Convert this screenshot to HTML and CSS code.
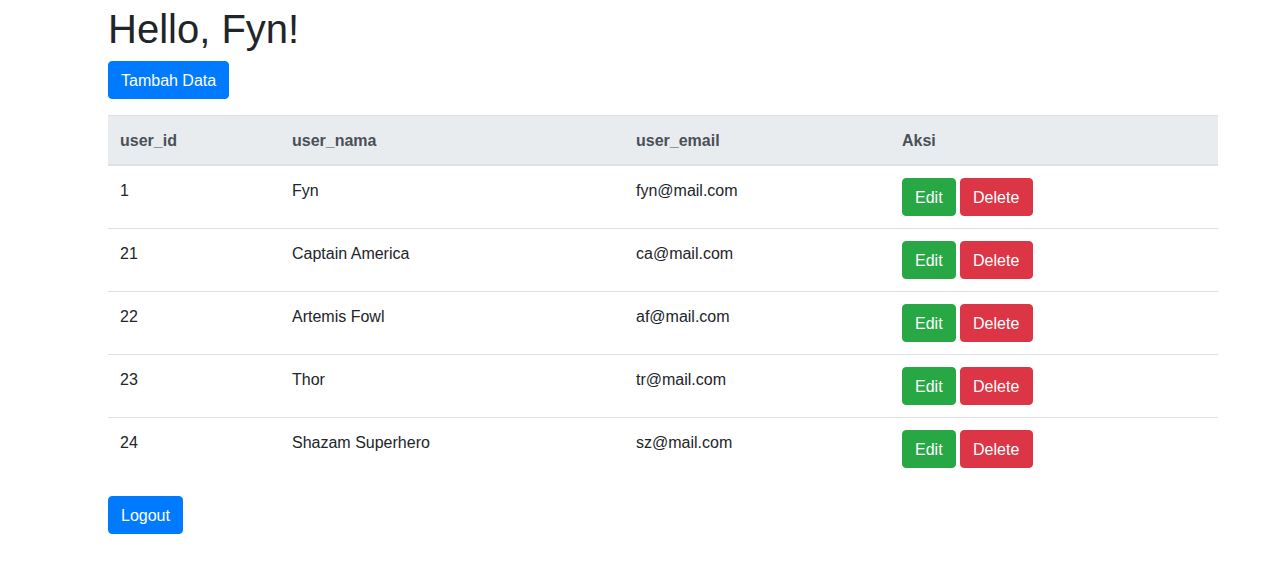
FILE: index.html
```html
<!DOCTYPE html>
<html lang="id">
<head>
<meta charset="utf-8">
<title>Hello, Fyn!</title>
<link rel="stylesheet" href="styles.css">
</head>
<body>
<div class="container">
  <h1 class="title">Hello, Fyn!</h1>
  <a class="btn btn-primary" href="#">Tambah Data</a>
  <table class="table">
    <colgroup>
      <col class="c1"><col class="c2"><col class="c3"><col class="c4">
    </colgroup>
    <thead>
      <tr><th>user_id</th><th>user_nama</th><th>user_email</th><th>Aksi</th></tr>
    </thead>
    <tbody>
      <tr><td>1</td><td>Fyn</td><td>fyn@mail.com</td><td class="actions"><a class="btn btn-success" href="#">Edit</a> <a class="btn btn-danger" href="#">Delete</a></td></tr>
      <tr><td>21</td><td>Captain America</td><td>ca@mail.com</td><td class="actions"><a class="btn btn-success" href="#">Edit</a> <a class="btn btn-danger" href="#">Delete</a></td></tr>
      <tr><td>22</td><td>Artemis Fowl</td><td>af@mail.com</td><td class="actions"><a class="btn btn-success" href="#">Edit</a> <a class="btn btn-danger" href="#">Delete</a></td></tr>
      <tr><td>23</td><td>Thor</td><td>tr@mail.com</td><td class="actions"><a class="btn btn-success" href="#">Edit</a> <a class="btn btn-danger" href="#">Delete</a></td></tr>
      <tr><td>24</td><td>Shazam Superhero</td><td>sz@mail.com</td><td class="actions"><a class="btn btn-success" href="#">Edit</a> <a class="btn btn-danger" href="#">Delete</a></td></tr>
    </tbody>
  </table>
  <a class="btn btn-primary" href="#">Logout</a>
</div>
</body>
</html>
```
FILE: styles.css
```css
* { box-sizing: border-box; }
html, body { margin: 0; padding: 0; background: #fff; }
body {
  font-family: "Liberation Sans", Arial, sans-serif;
  font-size: 16px;
  line-height: 1.5;
  color: #212529;
}
.container {
  width: 1110px;
  margin-left: 108px;
  padding-top: 5px;
}
.title {
  font-size: 40px;
  font-weight: 500;
  line-height: 1.2;
  margin: 0 0 8px 0;
}
.btn {
  display: inline-block;
  font-size: 16px;
  line-height: 24px;
  padding: 7px 12px 5px 12px;
  border: 1px solid transparent;
  border-radius: 4px;
  color: #fff;
  text-decoration: none;
  vertical-align: middle;
}
.btn-primary { background: #007bff; border-color: #007bff; }
.btn-success { background: #28a745; border-color: #28a745; }
.btn-danger { background: #dc3545; border-color: #dc3545; padding-right: 13px; }
.table {
  width: 1110px;
  margin: 16px 0 16px 0;
  border-collapse: collapse;
  table-layout: fixed;
}
.c1 { width: 172px; }
.c2 { width: 344px; }
.c3 { width: 266px; }
.c4 { width: 328px; }
.table th, .table td {
  padding: 13px 12px 11px 12px;
  text-align: left;
  vertical-align: top;
  border-top: 1px solid #dee2e6;
}
.table td.actions {
  padding-top: 12px;
  padding-bottom: 12px;
}
.table thead th {
  background: #e9ecef;
  color: #495057;
  font-weight: bold;
  vertical-align: bottom;
  border-bottom: 2px solid #dee2e6;
}
```
